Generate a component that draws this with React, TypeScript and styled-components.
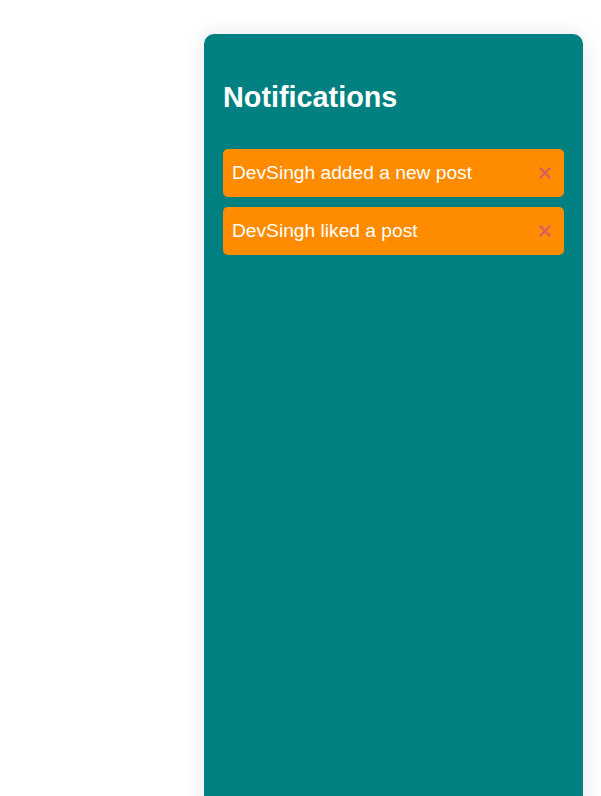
import React, { useState } from "react";
import styled, { createGlobalStyle } from "styled-components";

const GlobalStyle = createGlobalStyle`
  html, body {
    margin: 0;
    padding: 0;
    background: #ffffff;
    overflow: hidden;
    font-family: "Liberation Sans", Arial, sans-serif;
  }
`;

const Page = styled.div`
  display: flex;
  justify-content: flex-end;
  padding: 34px 18px 0 0;
  min-height: 100vh;
  box-sizing: border-box;
`;

const Panel = styled.aside`
  width: 379px;
  height: 800px;
  box-sizing: border-box;
  background: #008080;
  border-radius: 10px;
  box-shadow: 0 0 22px rgba(0, 0, 0, 0.1);
  padding: 47px 19px 19px;
  display: flex;
  flex-direction: column;
`;

const Title = styled.h2`
  margin: 0 0 36px;
  color: #ffffff;
  font-size: 28.8px;
  line-height: 32px;
  font-weight: 700;
`;

const List = styled.ul`
  list-style: none;
  margin: 0;
  padding: 0;
  display: flex;
  flex-direction: column;
  gap: 10px;
`;

const Item = styled.li`
  display: flex;
  align-items: center;
  justify-content: space-between;
  height: 48px;
  box-sizing: border-box;
  padding: 0 13px 0 9px;
  background: #ff8c00;
  border-radius: 5px;
  color: #ffffff;
  font-size: 19.2px;
`;

const Close = styled.button`
  display: flex;
  align-items: center;
  justify-content: center;
  width: 12px;
  height: 12px;
  padding: 0;
  border: none;
  background: transparent;
  cursor: pointer;
  color: #d25f63;
`;

const XIcon = () => (
  <svg width="12" height="12" viewBox="0 0 12 12" fill="none">
    <path d="M0.8 0.8 L11.2 11.2 M11.2 0.8 L0.8 11.2" stroke="currentColor" strokeWidth="2.2" strokeLinecap="butt" />
  </svg>
);

export default function App() {
  const [items, setItems] = useState([
    { id: 1, text: "DevSingh added a new post" },
    { id: 2, text: "DevSingh liked a post" },
  ]);
  return (
    <>
      <GlobalStyle />
      <Page>
        <Panel>
          <Title>Notifications</Title>
          <List>
            {items.map((n) => (
              <Item key={n.id}>
                <span>{n.text}</span>
                <Close aria-label="Dismiss" onClick={() => setItems(items.filter((i) => i.id !== n.id))}>
                  <XIcon />
                </Close>
              </Item>
            ))}
          </List>
        </Panel>
      </Page>
    </>
  );
}
